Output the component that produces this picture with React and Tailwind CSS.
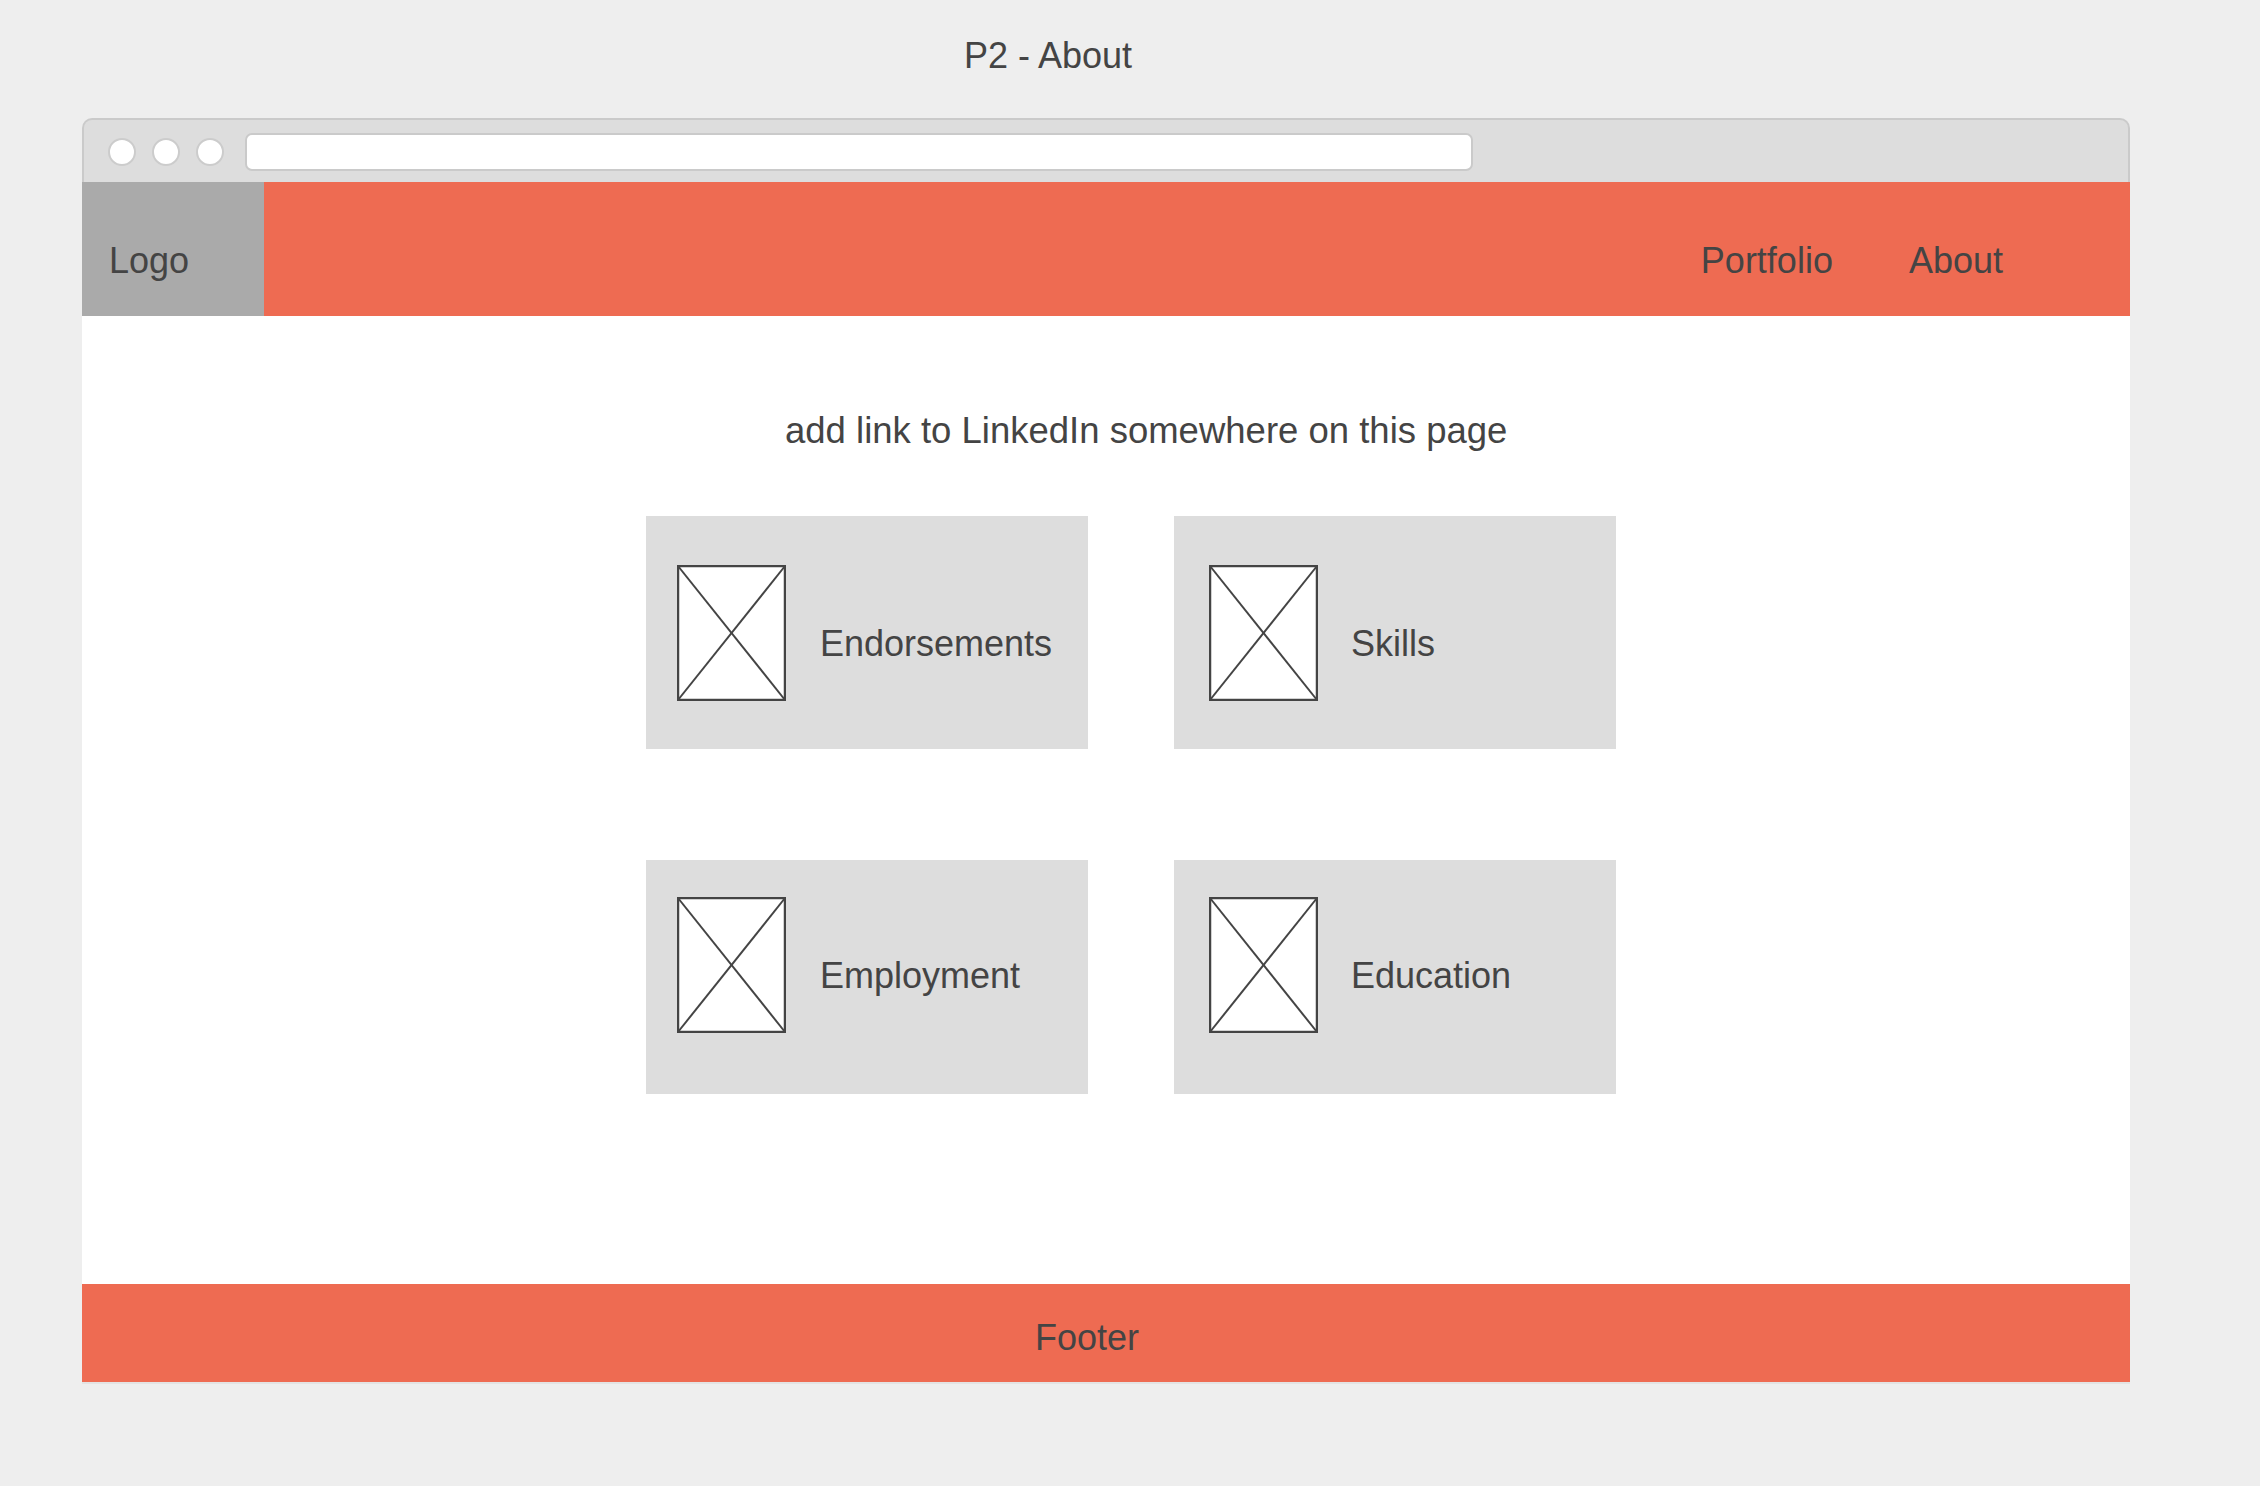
import React from 'react';

const ImagePlaceholder = () => (
    <svg width="109" height="136" viewBox="0 0 109 136" className="shrink-0 bg-white">
        <rect x="1" y="1" width="107" height="134" fill="white" stroke="#444444" strokeWidth="2.5" />
        <line x1="1" y1="1" x2="108" y2="135" stroke="#444444" strokeWidth="2" />
        <line x1="108" y1="1" x2="1" y2="135" stroke="#444444" strokeWidth="2" />
    </svg>
);

// each card in the mockup sits at slightly different offsets, so they come as props
const Card = ({ label, padLeft, imgTop, textGap, textTop, height }) => (
    <div className={`w-[442px] bg-[#dddddd] flex items-start ${height} ${padLeft}`}>
        <div className={imgTop}>
            <ImagePlaceholder />
        </div>
        <p className={`text-[36px] leading-[41px] ${textGap} ${textTop}`}>{label}</p>
    </div>
);

const App = () => {
    return (
        <div className="min-h-[1486px] bg-[#eeeeee] text-[#444444] font-['Liberation_Sans',Arial,sans-serif]">
            <div className="ml-[82px] w-[2048px] pt-[35px]">
                <h1 className="pl-[882px] text-[36px] leading-[41px] font-normal">P2 - About</h1>

                <div className="mt-[42px]">
                    {/* browser chrome */}
                    <div className="h-[64px] bg-[#dddddd] border-2 border-b-0 border-[#cacaca] rounded-t-[10px] flex items-start pl-[24px] pt-[13px]">
                        <div className="flex gap-[16px] mt-[5px]">
                            <span className="w-[28px] h-[28px] rounded-full bg-white border-2 border-[#cccccc]" />
                            <span className="w-[28px] h-[28px] rounded-full bg-white border-2 border-[#cccccc]" />
                            <span className="w-[28px] h-[28px] rounded-full bg-white border-2 border-[#cccccc]" />
                        </div>
                        <div className="ml-[21px] w-[1228px] h-[38px] bg-white rounded-[7px] border-2 border-[#cacaca]" />
                    </div>

                    {/* header */}
                    <div className="h-[134px] bg-[#ee6b52] flex">
                        <div className="w-[182px] bg-[#aaaaaa] pl-[27px] pt-[58px]">
                            <span className="text-[36px] leading-[41px]">Logo</span>
                        </div>
                        <nav className="ml-auto flex gap-[76px] pr-[127px] pt-[58px] text-[36px] leading-[41px]">
                            <span>Portfolio</span>
                            <span>About</span>
                        </nav>
                    </div>

                    {/* content */}
                    <div className="h-[968px] bg-white pt-[94px]">
                        <p className="pl-[703px] text-[36.5px] leading-[41px]">add link to LinkedIn somewhere on this page</p>
                        <div className="mt-[65px] pl-[564px] grid grid-cols-[442px_442px] gap-x-[86px] gap-y-[111px]">
                            <Card label="Endorsements" height="h-[233px]" padLeft="pl-[31px]" imgTop="mt-[49px]" textGap="ml-[34px]" textTop="mt-[107px]" />
                            <Card label="Skills" height="h-[233px]" padLeft="pl-[35px]" imgTop="mt-[49px]" textGap="ml-[33px]" textTop="mt-[107px]" />
                            <Card label="Employment" height="h-[234px]" padLeft="pl-[31px]" imgTop="mt-[37px]" textGap="ml-[34px]" textTop="mt-[95px]" />
                            <Card label="Education" height="h-[234px]" padLeft="pl-[35px]" imgTop="mt-[37px]" textGap="ml-[33px]" textTop="mt-[95px]" />
                        </div>
                    </div>

                    {/* footer */}
                    <div className="h-[98px] bg-[#ee6b52] pl-[953px] pt-[33px] shadow-[0_2px_0_#e3e3e3]">
                        <span className="text-[36px] leading-[41px]">Footer</span>
                    </div>
                </div>
            </div>
        </div>
    );
};

export default App;
